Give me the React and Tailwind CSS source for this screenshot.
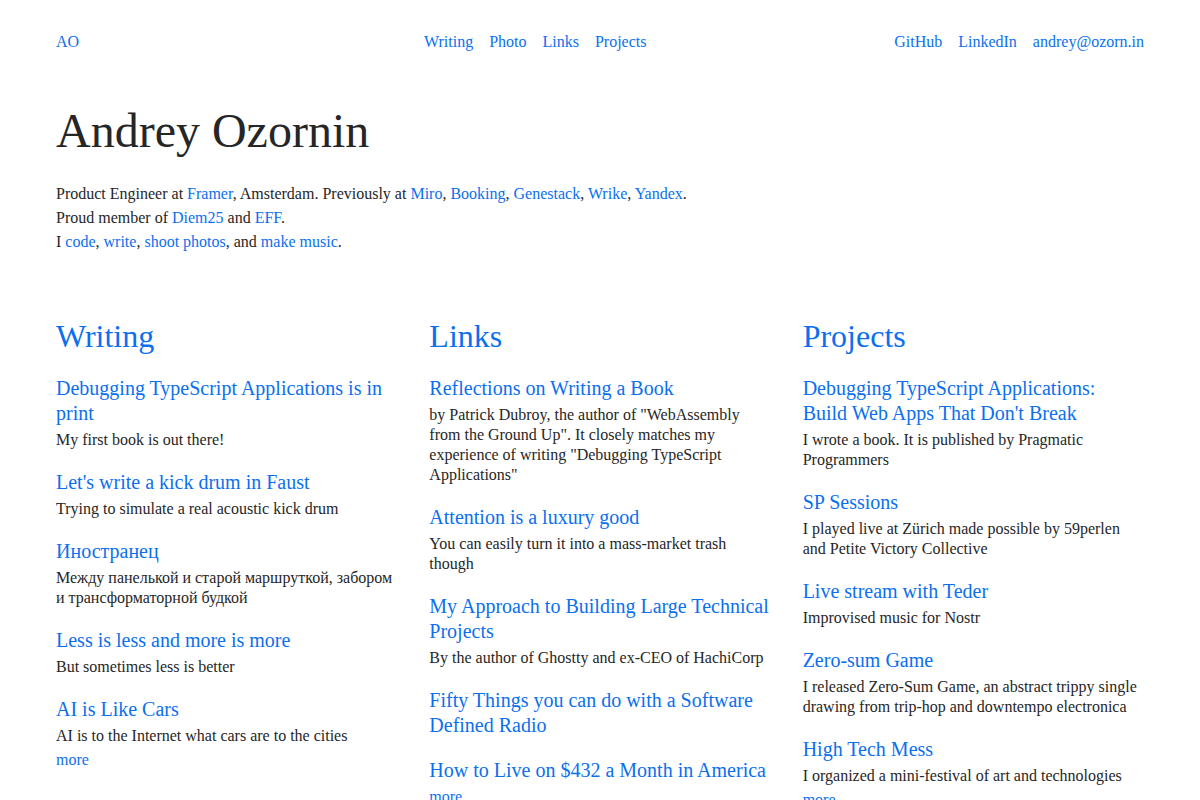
const link = 'text-[#0b6ff0] hover:underline'

const writing = [
  { title: 'Debugging TypeScript Applications is in print', text: 'My first book is out there!' },
  { title: "Let's write a kick drum in Faust", text: 'Trying to simulate a real acoustic kick drum' },
  { title: 'Иностранец', text: 'Между панелькой и старой маршруткой, забором и трансформаторной будкой' },
  { title: 'Less is less and more is more', text: 'But sometimes less is better' },
  { title: 'AI is Like Cars', text: 'AI is to the Internet what cars are to the cities' },
]

const links = [
  {
    title: 'Reflections on Writing a Book',
    text: 'by Patrick Dubroy, the author of "WebAssembly from the Ground Up". It closely matches my experience of writing "Debugging TypeScript Applications"',
  },
  { title: 'Attention is a luxury good', text: 'You can easily turn it into a mass-market trash though' },
  { title: 'My Approach to Building Large Technical Projects', text: 'By the author of Ghostty and ex-CEO of HachiCorp' },
  { title: 'Fifty Things you can do with a Software Defined Radio' },
  { title: 'How to Live on $432 a Month in America' },
]

const projects = [
  {
    title: "Debugging TypeScript Applications: Build Web Apps That Don't Break",
    text: 'I wrote a book. It is published by Pragmatic Programmers',
  },
  { title: 'SP Sessions', text: 'I played live at Zürich made possible by 59perlen and Petite Victory Collective' },
  { title: 'Live stream with Teder', text: 'Improvised music for Nostr' },
  {
    title: 'Zero-sum Game',
    text: 'I released Zero-Sum Game, an abstract trippy single drawing from trip-hop and downtempo electronica',
  },
  { title: 'High Tech Mess', text: 'I organized a mini-festival of art and technologies' },
]

function Section({ title, items }) {
  return (
    <section>
      <h2 className="mb-5 text-[32px] leading-10">
        <a href="#" className={link}>{title}</a>
      </h2>
      <ul className="flex flex-col gap-5">
        {items.map((item) => (
          <li key={item.title}>
            <a href="#" className={`block text-[20px] leading-[25px] ${link}`}>
              {item.title}
            </a>
            {item.text && <p className="mt-1 text-base leading-5">{item.text}</p>}
          </li>
        ))}
      </ul>
      <a href="#" className={`mt-0.5 block text-base leading-6 ${link}`}>more</a>
    </section>
  )
}

export default function App() {
  const A = ({ children }) => <a href="#" className={link}>{children}</a>

  return (
    <div className="min-h-screen bg-white px-14 pt-[30px] pb-16 font-['Liberation_Serif','Times_New_Roman',serif] text-[#262626]">
      <nav className="grid grid-cols-3 gap-4 text-base leading-6">
        <div>
          <A>AO</A>
        </div>
        <div className="flex gap-4">
          <A>Writing</A>
          <A>Photo</A>
          <A>Links</A>
          <A>Projects</A>
        </div>
        <div className="flex justify-end gap-4">
          <A>GitHub</A>
          <A>LinkedIn</A>
          <A>andrey@ozorn.in</A>
        </div>
      </nav>

      <header className="mt-[48px]">
        <h1 className="text-[48px] leading-[58px]">Andrey Ozornin</h1>
        <div className="mt-[22px] text-base leading-6">
          <p>
            Product Engineer at <A>Framer</A>, Amsterdam. Previously at <A>Miro</A>, <A>Booking</A>,{' '}
            <A>Genestack</A>, <A>Wrike</A>, <A>Yandex</A>.
          </p>
          <p>
            Proud member of <A>Diem25</A> and <A>EFF</A>.
          </p>
          <p>
            I <A>code</A>, <A>write</A>, <A>shoot photos</A>, and <A>make music</A>.
          </p>
        </div>
      </header>

      <main className="mt-[62px] grid grid-cols-3 gap-8">
        <Section title="Writing" items={writing} />
        <Section title="Links" items={links} />
        <Section title="Projects" items={projects} />
      </main>
    </div>
  )
}
